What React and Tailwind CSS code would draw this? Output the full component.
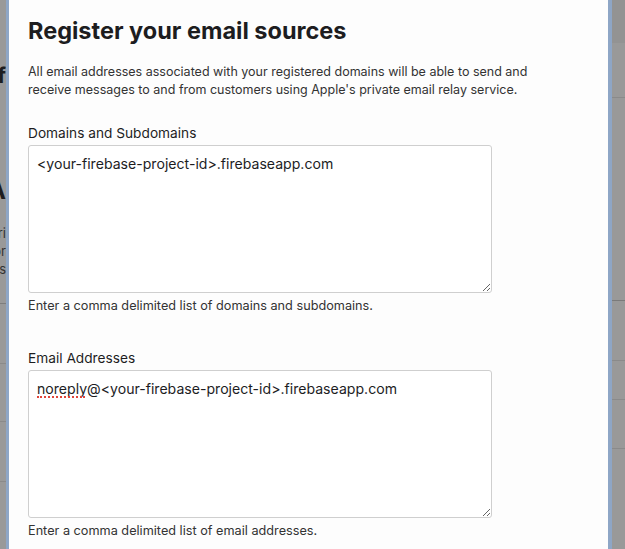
import React from "react";

const Field = ({ label, value, help, underline }) => (
  <div className="flex flex-col">
    <label className="text-[13.7px] leading-[20px] text-[#1d1d1f]">{label}</label>
    <div className="relative mt-[2px] w-[464px]">
      <textarea
        defaultValue={value}
        spellCheck={false}
        className="block h-[148px] w-[464px] resize-y rounded-[3px] border border-[#cfcfcf] bg-white px-[8px] pt-[8px] text-[14.1px] leading-[20px] text-[#1d1d1f] outline-none"
        style={{ fontFamily: "Inter, 'Noto Sans', sans-serif" }}
      />
      {underline && (
        <span className="pointer-events-none absolute left-[9px] top-[26px] h-[2px] w-[48px] border-b-2 border-dotted border-[#e0453a]" />
      )}
    </div>
    <p className="mt-[4px] text-[12.7px] leading-[18px] text-[#333]">{help}</p>
  </div>
);

export default function App() {
  return (
    <div
      className="flex h-[549px] w-[625px] overflow-hidden bg-[#999999]"
      style={{ fontFamily: "Inter, 'Noto Sans', sans-serif" }}
    >
      {/* page behind the sheet, left edge */}
      <div className="flex w-[6px] flex-col items-end overflow-hidden whitespace-nowrap">
        <div className="mt-[64px] text-[22px] font-bold leading-[22px] text-[#1d1d1f]">f</div>
        <div className="mt-[92px] text-[24px] font-bold leading-[26px] text-[#1d1d1f]">A</div>
        <div className="mt-[20px] flex flex-col items-end text-[13px] leading-[18px] text-[#333]">
          <span>ri</span>
          <span>or</span>
          <span>ds</span>
        </div>
        <div className="mt-[25px] h-px w-full bg-[#7d7d7d]" />
        <div className="mt-[59px] h-px w-full bg-[#8a8a8a]" />
        <div className="mt-[57px] h-px w-full bg-[#8a8a8a]" />
        <div className="mt-[59px] h-px w-full bg-[#8a8a8a]" />
      </div>
      <div className="w-[3px] bg-[#8ea6c6]" />

      {/* sheet */}
      <div className="flex-1 bg-[#fdfdfd] pl-[19px] pt-[17px]">
        <h1 className="text-[23.5px] font-bold leading-[28px] text-[#1d1d1f]">
          Register your email sources
        </h1>
        <p className="mt-[18px] w-[520px] text-[12.5px] leading-[18px] text-[#333]">
          All email addresses associated with your registered domains will be able to send and
          receive messages to and from customers using Apple's private email relay service.
        </p>
        <div className="mt-[24px] flex flex-col gap-[33px]">
          <Field
            label="Domains and Subdomains"
            value="<your-firebase-project-id>.firebaseapp.com"
            help="Enter a comma delimited list of domains and subdomains."
          />
          <Field
            label="Email Addresses"
            value="noreply@<your-firebase-project-id>.firebaseapp.com"
            help="Enter a comma delimited list of email addresses."
            underline
          />
        </div>
      </div>

      <div className="w-[4px] bg-[#8ea6c6]" />
      <div className="flex w-[13px] flex-col">
        <div className="h-[43px] bg-[#939393]" />
        <div className="mt-[54px] h-px bg-[#8a8a8a]" />
        <div className="mt-[202px] h-px bg-[#7a7a7a]" />
        <div className="mt-[59px] h-px bg-[#8a8a8a]" />
        <div className="mt-[38px] h-px bg-[#8a8a8a]" />
        <div className="mt-[48px] h-px bg-[#8a8a8a]" />
      </div>
    </div>
  );
}
